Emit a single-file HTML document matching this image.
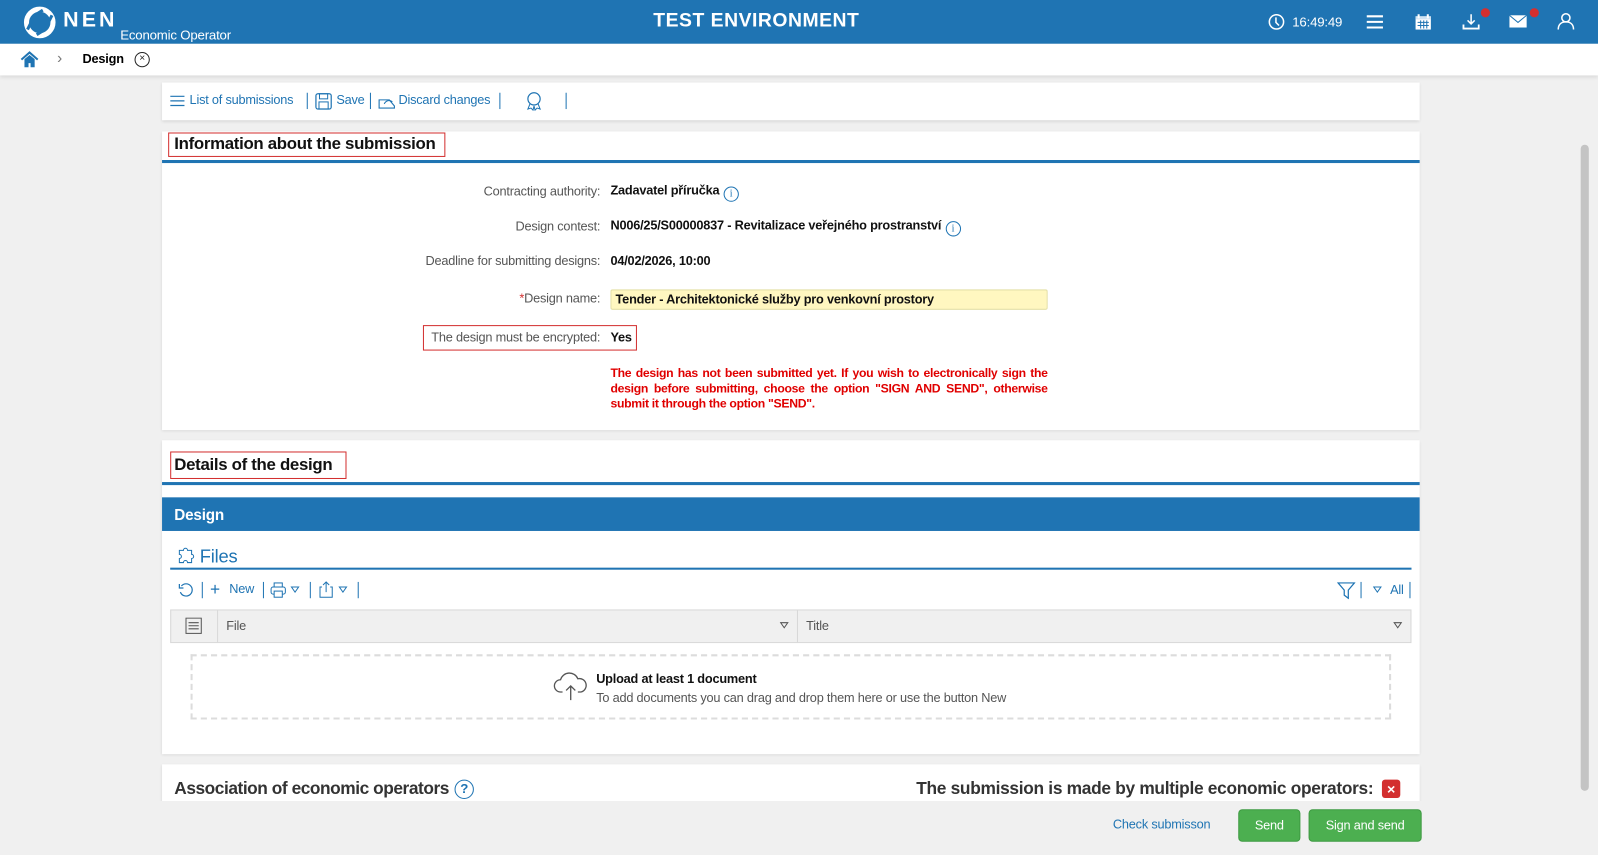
<!DOCTYPE html>
<html><head><meta charset="utf-8"><style>
*{box-sizing:border-box;margin:0;padding:0}
html,body{width:1598px;height:855px;overflow:hidden;background:#f0f0f0}
#w{position:absolute;left:0;top:0;width:1568px;height:839px;transform:scale(1.01913);transform-origin:0 0;font-family:"Liberation Sans",sans-serif;font-size:12.5px;color:#222;letter-spacing:-0.2px}
.a{position:absolute;white-space:nowrap}
.card{position:absolute;left:159px;width:1234px;background:#fff;box-shadow:0 1px 3px rgba(0,0,0,.12)}
.lbl{position:absolute;right:979px;color:#555;text-align:right;white-space:nowrap}
.val{position:absolute;left:599px;font-weight:bold;color:#111;white-space:nowrap}
.blue{color:#1f74b3}
.sep{position:absolute;width:1px;height:16px;background:#1f74b3}
.info{display:inline-block;width:15px;height:15px;border:1px solid #1f74b3;border-radius:50%;color:#1f74b3;font-size:10px;text-align:center;line-height:13px;font-weight:normal;vertical-align:-2px;margin-left:4px;font-family:"Liberation Serif",serif}
</style></head><body><div id="w">
<div class="a" style="left:0;top:0;width:1568px;height:43px;background:#1f74b3"></div>
<svg class="a" style="left:22px;top:5px" width="34" height="34" viewBox="0 0 34 34"><circle cx="17" cy="17" r="13" fill="none" stroke="#fff" stroke-width="5"/><path d="M5 24 L12 10 L20 5" stroke="#1f74b3" stroke-width="3" fill="none"/><path d="M29 10 L22 24 L14 29" stroke="#1f74b3" stroke-width="3" fill="none"/></svg>
<div class="a" style="left:62px;top:8px;color:#fff;font-weight:bold;font-size:21px;letter-spacing:3px">NEN</div>
<div class="a" style="left:118px;top:27px;color:#fff;font-size:13px">Economic Operator</div>
<div class="a" style="left:641px;top:10px;color:#fff;font-weight:bold;font-size:19px;letter-spacing:0.5px">TEST ENVIRONMENT</div>
<svg class="a" style="left:1244px;top:13px" width="17" height="17"><circle cx="8.5" cy="8.5" r="7" fill="none" stroke="#fff" stroke-width="1.5"/><path d="M8 4v5l3 3" stroke="#fff" stroke-width="1.5" fill="none"/></svg>
<div class="a" style="left:1268px;top:14px;color:#fff;font-size:13px">16:49:49</div>
<svg class="a" style="left:1341px;top:14px" width="17" height="15"><path d="M0 2h16M0 7.5h16M0 13h16" stroke="#fff" stroke-width="2"/></svg>
<svg class="a" style="left:1388px;top:13px" width="17" height="17"><rect x="1" y="3" width="15" height="13" fill="#fff"/><rect x="1" y="3" width="15" height="3" fill="#cfe3f3"/><path d="M4 1v4M13 1v4" stroke="#fff" stroke-width="2"/><path d="M3 9h11M3 12h11M6 7v8M9 7v8M12 7v8" stroke="#1f74b3" stroke-width="1"/></svg>
<svg class="a" style="left:1435px;top:13px" width="17" height="17"><path d="M8.5 1v9M5 7l3.5 3.5L12 7" stroke="#fff" stroke-width="1.5" fill="none"/><path d="M1 11v4h15v-4" stroke="#fff" stroke-width="1.8" fill="none"/></svg>
<div class="a" style="left:1453px;top:8px;width:9px;height:9px;border-radius:50%;background:#d32f2f"></div>
<svg class="a" style="left:1481px;top:14px" width="18" height="14"><rect x="0" y="1" width="17" height="12" fill="#fff"/><path d="M0 1l8.5 7L17 1" stroke="#1f74b3" fill="none"/></svg>
<div class="a" style="left:1501px;top:8px;width:9px;height:9px;border-radius:50%;background:#d32f2f"></div>
<svg class="a" style="left:1528px;top:12px" width="17" height="18"><circle cx="8.5" cy="5.5" r="4" fill="none" stroke="#fff" stroke-width="1.5"/><path d="M1 17c0-5 3-7.5 7.5-7.5S16 12 16 17" fill="none" stroke="#fff" stroke-width="1.5"/></svg>
<div class="a" style="left:0;top:43px;width:1568px;height:31px;background:#fff;box-shadow:0 2px 4px rgba(0,0,0,.1)"></div>
<svg class="a" style="left:20px;top:50px" width="18" height="17"><path d="M1 8.5L9 1.5l8 7" stroke="#1f74b3" stroke-width="2" fill="none"/><path d="M4 8v8h4v-4h2v4h4V8L9 4z" fill="#1f74b3"/></svg>
<div class="a" style="left:56px;top:49px;color:#777;font-size:15px">›</div>
<div class="a" style="left:81px;top:51px;font-weight:bold;font-size:12.5px;color:#000">Design</div>
<div class="a" style="left:132px;top:51px;width:15px;height:15px;border:1.3px solid #222;border-radius:50%;font-size:10px;text-align:center;line-height:12px">×</div>
<div class="a" style="left:1551px;top:142px;width:8px;height:634px;background:#c4c4c4;border-radius:4px"></div>
<div class="card" style="top:81px;height:37px"></div>
<svg class="a" style="left:167px;top:93px" width="15" height="12"><path d="M0 1.5h14M0 6h14M0 10.5h14" stroke="#1f74b3" stroke-width="1.2"/></svg>
<div class="a blue" style="left:186px;top:91px">List of submissions</div>
<div class="sep" style="left:301px;top:91px"></div>
<svg class="a" style="left:309px;top:91px" width="17" height="17"><rect x="1" y="1" width="15" height="15" rx="2" fill="none" stroke="#1f74b3" stroke-width="1.2"/><rect x="4.5" y="1" width="8" height="5" fill="none" stroke="#1f74b3"/><rect x="4" y="9" width="9" height="7" fill="none" stroke="#1f74b3"/></svg>
<div class="a blue" style="left:330px;top:91px">Save</div>
<div class="sep" style="left:363px;top:91px"></div>
<svg class="a" style="left:371px;top:93px" width="18" height="14"><path d="M1 5h10l5 6v2H1z" fill="none" stroke="#1f74b3" stroke-width="1.1"/><path d="M6 9c2-4 6-4 8-2" fill="none" stroke="#1f74b3"/></svg>
<div class="a blue" style="left:391px;top:91px">Discard changes</div>
<div class="sep" style="left:490px;top:91px"></div>
<svg class="a" style="left:515px;top:90px" width="18" height="19"><circle cx="9" cy="7" r="6" fill="none" stroke="#1f74b3" stroke-width="1.2"/><path d="M5 12l-2 5 3-1 2 2 1-4M13 12l2 5-3-1-2 2-1-4" fill="none" stroke="#1f74b3"/></svg>
<div class="sep" style="left:555px;top:91px"></div>
<div class="card" style="top:129px;height:293px"></div>
<div class="a" style="left:165px;top:130px;width:272px;height:24px;border:1.3px solid #d32f2f"></div>
<div class="a" style="left:171px;top:132px;font-size:16.5px;font-weight:bold;color:#111;letter-spacing:-0.3px">Information about the submission</div>
<div class="a" style="left:159px;top:157px;width:1234px;height:3px;background:#1f74b3"></div>
<div class="lbl" style="top:181px">Contracting authority:</div>
<div class="val" style="top:180px">Zadavatel příručka<span class="info">i</span></div>
<div class="lbl" style="top:215px">Design contest:</div>
<div class="val" style="top:214px">N006/25/S00000837 - Revitalizace veřejného prostranství<span class="info">i</span></div>
<div class="lbl" style="top:249px">Deadline for submitting designs:</div>
<div class="val" style="top:249px">04/02/2026, 10:00</div>
<div class="lbl" style="top:286px"><span style="color:#d32f2f">*</span>Design name:</div>
<div class="a" style="left:599px;top:284px;width:429px;height:20px;background:#fff7c0;border:1px solid #e4e0a8;border-radius:2px"></div>
<div class="val" style="left:604px;top:287px">Tender - Architektonické služby pro venkovní prostory</div>
<div class="a" style="left:415px;top:319px;width:210px;height:25px;border:1.3px solid #d32f2f"></div>
<div class="lbl" style="top:324px">The design must be encrypted:</div>
<div class="val" style="top:324px">Yes</div>
<div class="a" style="left:599px;top:359px;width:429px;white-space:normal;color:#e00000;font-weight:bold;font-size:12px;line-height:15px;text-align:justify;letter-spacing:-0.3px">The design has not been submitted yet. If you wish to electronically sign the design before submitting, choose the option "SIGN AND SEND", otherwise submit it through the option "SEND".</div>
<div class="card" style="top:432px;height:308px"></div>
<div class="a" style="left:167px;top:443px;width:173px;height:27px;border:1.3px solid #d32f2f"></div>
<div class="a" style="left:171px;top:447px;font-size:16.5px;font-weight:bold;color:#111;letter-spacing:-0.3px">Details of the design</div>
<div class="a" style="left:159px;top:473px;width:1234px;height:3px;background:#1f74b3"></div>
<div class="a" style="left:159px;top:488px;width:1234px;height:33px;background:#1f74b3"></div>
<div class="a" style="left:171px;top:497px;color:#fff;font-weight:bold;font-size:15px">Design</div>
<svg class="a" style="left:174px;top:537px" width="17" height="17"><path d="M2 3h4a2 2 0 014 0h4v4a2 2 0 010 4v4h-4a2 2 0 00-4 0H2v-4a2 2 0 000-4z" fill="none" stroke="#1f74b3" stroke-width="1"/></svg>
<div class="a blue" style="left:196px;top:536px;font-size:18px">Files</div>
<div class="a" style="left:167px;top:557px;width:1218px;height:1.5px;background:#1f74b3"></div>
<svg class="a" style="left:175px;top:571px" width="16" height="16"><path d="M3 4a6 6 0 11-1 6" fill="none" stroke="#1f74b3" stroke-width="1.2"/><path d="M1 2v4h4" fill="none" stroke="#1f74b3" stroke-width="1.2"/></svg>
<div class="sep" style="left:198px;top:571px"></div>
<div class="a blue" style="left:206px;top:569px;font-size:17px;font-weight:300">+</div>
<div class="a blue" style="left:225px;top:571px">New</div>
<div class="sep" style="left:258px;top:571px"></div>
<svg class="a" style="left:265px;top:571px" width="32" height="16"><rect x="4" y="1" width="8" height="4" fill="none" stroke="#1f74b3"/><rect x="1" y="5" width="14" height="7" rx="2" fill="none" stroke="#1f74b3"/><rect x="4" y="9" width="8" height="6" fill="#fff" stroke="#1f74b3"/><path d="M21 5h7l-3.5 5z" fill="none" stroke="#1f74b3"/></svg>
<div class="sep" style="left:304px;top:571px"></div>
<svg class="a" style="left:313px;top:570px" width="30" height="17"><path d="M3 6H1v10h12V6h-2M7 11V1M4 4l3-3 3 3" fill="none" stroke="#1f74b3"/><path d="M20 6h7l-3.5 5z" fill="none" stroke="#1f74b3"/></svg>
<div class="sep" style="left:351px;top:571px"></div>
<svg class="a" style="left:1312px;top:571px" width="18" height="17"><path d="M1 1h16l-6 7v8l-4-3V8z" fill="none" stroke="#1f74b3" stroke-width="1.2"/></svg>
<div class="sep" style="left:1335px;top:571px"></div>
<svg class="a" style="left:1347px;top:575px" width="10" height="8"><path d="M1 1h7l-3.5 5z" fill="none" stroke="#1f74b3"/></svg>
<div class="a blue" style="left:1364px;top:572px">All</div>
<div class="sep" style="left:1383px;top:571px"></div>
<div class="a" style="left:167px;top:598px;width:1218px;height:33px;background:#f0f0f0;border:1px solid #d8d8d8"></div>
<div class="a" style="left:213px;top:599px;width:1px;height:31px;background:#d8d8d8"></div>
<div class="a" style="left:782px;top:599px;width:1px;height:31px;background:#d8d8d8"></div>
<svg class="a" style="left:182px;top:606px" width="17" height="17"><rect x=".5" y=".5" width="15" height="15" fill="none" stroke="#555"/><path d="M3 5h10M3 8h10M3 11h10" stroke="#555"/></svg>
<div class="a" style="left:222px;top:607px;color:#555">File</div>
<div class="a" style="left:791px;top:607px;color:#555">Title</div>
<svg class="a" style="left:765px;top:610px" width="9" height="7"><path d="M1 1h7L4.5 6z" fill="none" stroke="#555"/></svg>
<svg class="a" style="left:1367px;top:610px" width="9" height="7"><path d="M1 1h7L4.5 6z" fill="none" stroke="#555"/></svg>
<div class="a" style="left:187px;top:642px;width:1178px;height:64px;border:2px dashed #dcdcdc"></div>
<svg class="a" style="left:543px;top:656px" width="34" height="32"><path d="M9 23H7a6 6 0 010-12 9 9 0 0117-1 6.5 6.5 0 013 13h-3" fill="none" stroke="#555" stroke-width="1.3"/><path d="M17 31V17M12.5 21.5L17 17l4.5 4.5" fill="none" stroke="#555" stroke-width="1.3"/></svg>
<div class="a" style="left:585px;top:659px;font-weight:bold;color:#111">Upload at least 1 document</div>
<div class="a" style="left:585px;top:678px;color:#555">To add documents you can drag and drop them here or use the button New</div>
<div class="card" style="top:750px;height:40px"></div>
<div class="a" style="left:171px;top:764px;font-weight:bold;font-size:17px;color:#333;letter-spacing:-0.45px">Association of economic operators</div>
<div class="a" style="left:446px;top:765px;width:19px;height:19px;border:1.6px solid #1f74b3;border-radius:50%;color:#1f74b3;font-weight:bold;font-size:13px;text-align:center;line-height:16px">?</div>
<div class="a" style="left:899px;top:764px;font-weight:bold;font-size:17px;color:#333;letter-spacing:-0.3px">The submission is made by multiple economic operators:</div>
<div class="a" style="left:1356px;top:765px;width:18px;height:18px;background:#d32f2f;border-radius:3px;color:#fff;font-weight:bold;font-size:14px;text-align:center;line-height:18px">×</div>
<div class="a" style="left:0;top:786px;width:1548px;height:53px;background:#f0f0f0"></div>
<div class="a blue" style="left:1092px;top:802px">Check submisson</div>
<div class="a" style="left:1215px;top:794px;width:61px;height:32px;background:#4caf50;border:1px solid #3e9a42;border-radius:4px;color:#fff;text-align:center;line-height:30px">Send</div>
<div class="a" style="left:1284px;top:794px;width:111px;height:32px;background:#4caf50;border:1px solid #3e9a42;border-radius:4px;color:#fff;text-align:center;line-height:30px">Sign and send</div>
</div></body></html>
